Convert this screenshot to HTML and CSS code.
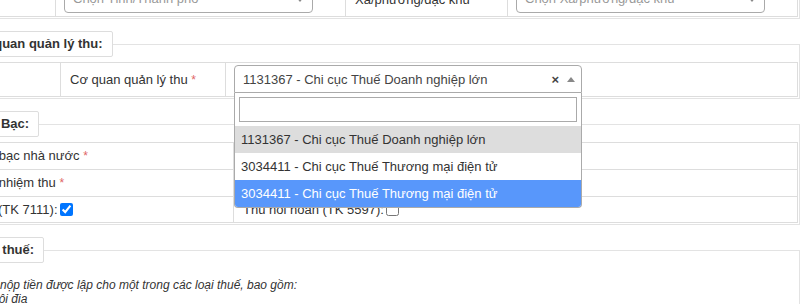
FILE: index.html
```html
<!DOCTYPE html>
<html lang="vi">
<head>
    <meta charset="UTF-8">
    <meta name="viewport" content="width=device-width, initial-scale=1.0">
    <title>Giấy nộp tiền</title>
    <link rel="stylesheet" href="styles.css">
</head>
<body>
    <div class="page">
        <fieldset class="group">
            <legend>Địa chỉ người nộp thuế:</legend>
            <table class="grid grid-addr">
                <colgroup><col class="c-a1"><col class="c-a2"><col class="c-a3"><col class="c-a4"></colgroup>
                <tr>
                    <td class="lbl">Địa chỉ</td>
                    <td class="val" colspan="3"><div class="sel placeholder">Nhập địa chỉ</div></td>
                </tr>
                <tr>
                    <td class="lbl lbl-top">Tỉnh/TP</td>
                    <td class="val"><div class="sel placeholder">Chọn Tỉnh/Thành phố<span class="caret"></span></div></td>
                    <td class="lbl">Xã/phường/đặc khu</td>
                    <td class="val"><div class="sel placeholder">Chọn Xã/phường/đặc khu<span class="caret"></span></div></td>
                </tr>
            </table>
        </fieldset>

        <fieldset class="group">
            <legend>Cơ quan quản lý thu:</legend>
            <table class="grid">
                <colgroup><col class="c-q1"><col class="c-q2"><col></colgroup>
                <tr>
                    <td class="lbl"></td>
                    <td class="lbl">Cơ quan quản lý thu <span class="req">*</span></td>
                    <td class="val">
                        <div class="s2">
                            <div class="s2-box">
                                <span class="s2-text">1131367 - Chi cục Thuế Doanh nghiệp lớn</span>
                                <span class="s2-clear">×</span>
                                <span class="s2-arrow"></span>
                            </div>
                            <div class="s2-drop">
                                <div class="s2-search"><input type="text"></div>
                                <ul class="s2-results">
                                    <li class="selected">1131367 - Chi cục Thuế Doanh nghiệp lớn</li>
                                    <li>3034411 - Chi cục Thuế Thương mại điện tử</li>
                                    <li class="highlight">3034411 - Chi cục Thuế Thương mại điện tử</li>
                                </ul>
                            </div>
                        </div>
                    </td>
                </tr>
            </table>
        </fieldset>

        <fieldset class="group">
            <legend>Kho Bạc:</legend>
            <table class="grid">
                <colgroup><col class="c-k1"><col></colgroup>
                <tr>
                    <td class="lbl">Kho bạc nhà nước <span class="req">*</span></td>
                    <td class="lbl"></td>
                </tr>
                <tr>
                    <td class="lbl">Bên nhiệm thu <span class="req">*</span></td>
                    <td class="lbl"></td>
                </tr>
                <tr>
                    <td class="lbl">Thu (TK 7111):<input type="checkbox" checked></td>
                    <td class="lbl">Thu hồi hoàn (TK 5597):<input type="checkbox"></td>
                </tr>
            </table>
        </fieldset>

        <fieldset class="group">
            <legend>Loại thuế:</legend>
            <div class="note">
                <p>Giấy nộp tiền được lập cho một trong các loại thuế, bao gồm:<br>
                (1) Nội địa<br>
                (2) Xuất nhập khẩu</p>
            </div>
        </fieldset>
    </div>
</body>
</html>
```

FILE: styles.css
```css
body {
    margin: 0;
    font-family: "Liberation Sans", Arial, sans-serif;
    font-size: 13px;
    color: #333;
    background-color: #fff;
    overflow: hidden;
}

.page {
    margin: -83px 0 0 -40px;
    width: 840px;
}

.group {
    border: 1px solid #e3e3e3;
    margin: 0 0 12px;
    padding: 5px 1px 1px;
    min-width: 0;
}

.group legend {
    font-weight: bold;
    line-height: 16px;
    padding: 4px 9px;
    border: 1px solid #ddd;
    border-radius: 2px;
}

.grid {
    width: 100%;
    border-collapse: collapse;
    table-layout: fixed;
}

.grid td {
    border: 1px solid #ddd;
    padding: 5px 9px;
    line-height: 15px;
    vertical-align: middle;
    white-space: nowrap;
}

.grid td.val {
    padding: 2px 8px 3px;
}

.grid td.lbl-top {
    vertical-align: top;
    padding-top: 2px;
}

.c-a1 { width: 93px; }
.c-a2 { width: 290px; }
.c-a3 { width: 162px; }
.c-q1 { width: 98px; }
.c-q2 { width: 165px; }
.c-k1 { width: 271px; }

.req {
    color: #e06666;
    font-size: 12px;
}

.grid input[type="checkbox"] {
    width: 13px;
    height: 13px;
    margin: 0 0 0 2px;
    vertical-align: -2px;
}

/* plain select */
.sel {
    position: relative;
    width: 249px;
    height: 28px;
    box-sizing: border-box;
    border: 1px solid #aaa;
    border-radius: 4px;
    padding: 0 20px 0 8px;
    line-height: 26px;
}

.sel.placeholder {
    color: #999;
}

.caret {
    position: absolute;
    right: 8px;
    top: 11px;
    border-style: solid;
    border-width: 5px 4px 0;
    border-color: #888 transparent transparent;
}

/* select2-like combobox, open */
.s2 {
    position: relative;
    width: 348px;
}

.s2-box {
    display: flex;
    align-items: center;
    height: 28px;
    box-sizing: border-box;
    border: 1px solid #aaa;
    border-radius: 4px 4px 0 0;
    padding-left: 8px;
    color: #444;
}

.s2-text {
    flex: 1;
    overflow: hidden;
    white-space: nowrap;
}

.s2-clear {
    font-weight: bold;
    margin-right: 8px;
}

.s2-arrow {
    width: 0;
    height: 0;
    border-style: solid;
    border-width: 0 4px 5px;
    border-color: transparent transparent #888;
    margin-right: 6px;
}

.s2-drop {
    position: absolute;
    top: 100%;
    left: 0;
    right: 0;
    z-index: 10;
    background-color: #fff;
    border: 1px solid #aaa;
    border-top: none;
    border-radius: 0 0 4px 4px;
    overflow: hidden;
}

.s2-search {
    padding: 4px;
}

.s2-search input {
    display: block;
    width: 100%;
    height: 25px;
    box-sizing: border-box;
    border: 1px solid #aaa;
    padding: 4px;
    font: inherit;
}

.s2-results {
    list-style: none;
    margin: 0;
    padding: 0;
}

.s2-results li {
    padding: 6px;
    line-height: 15px;
    white-space: nowrap;
}

.s2-results li.selected {
    background-color: #ddd;
}

.s2-results li.highlight {
    background-color: #5897fb;
    color: #fff;
}

.note {
    padding: 10px 10px 30px;
    font-style: italic;
    font-size: 12px;
}

.note p {
    margin: 0;
    line-height: 14px;
}
```
